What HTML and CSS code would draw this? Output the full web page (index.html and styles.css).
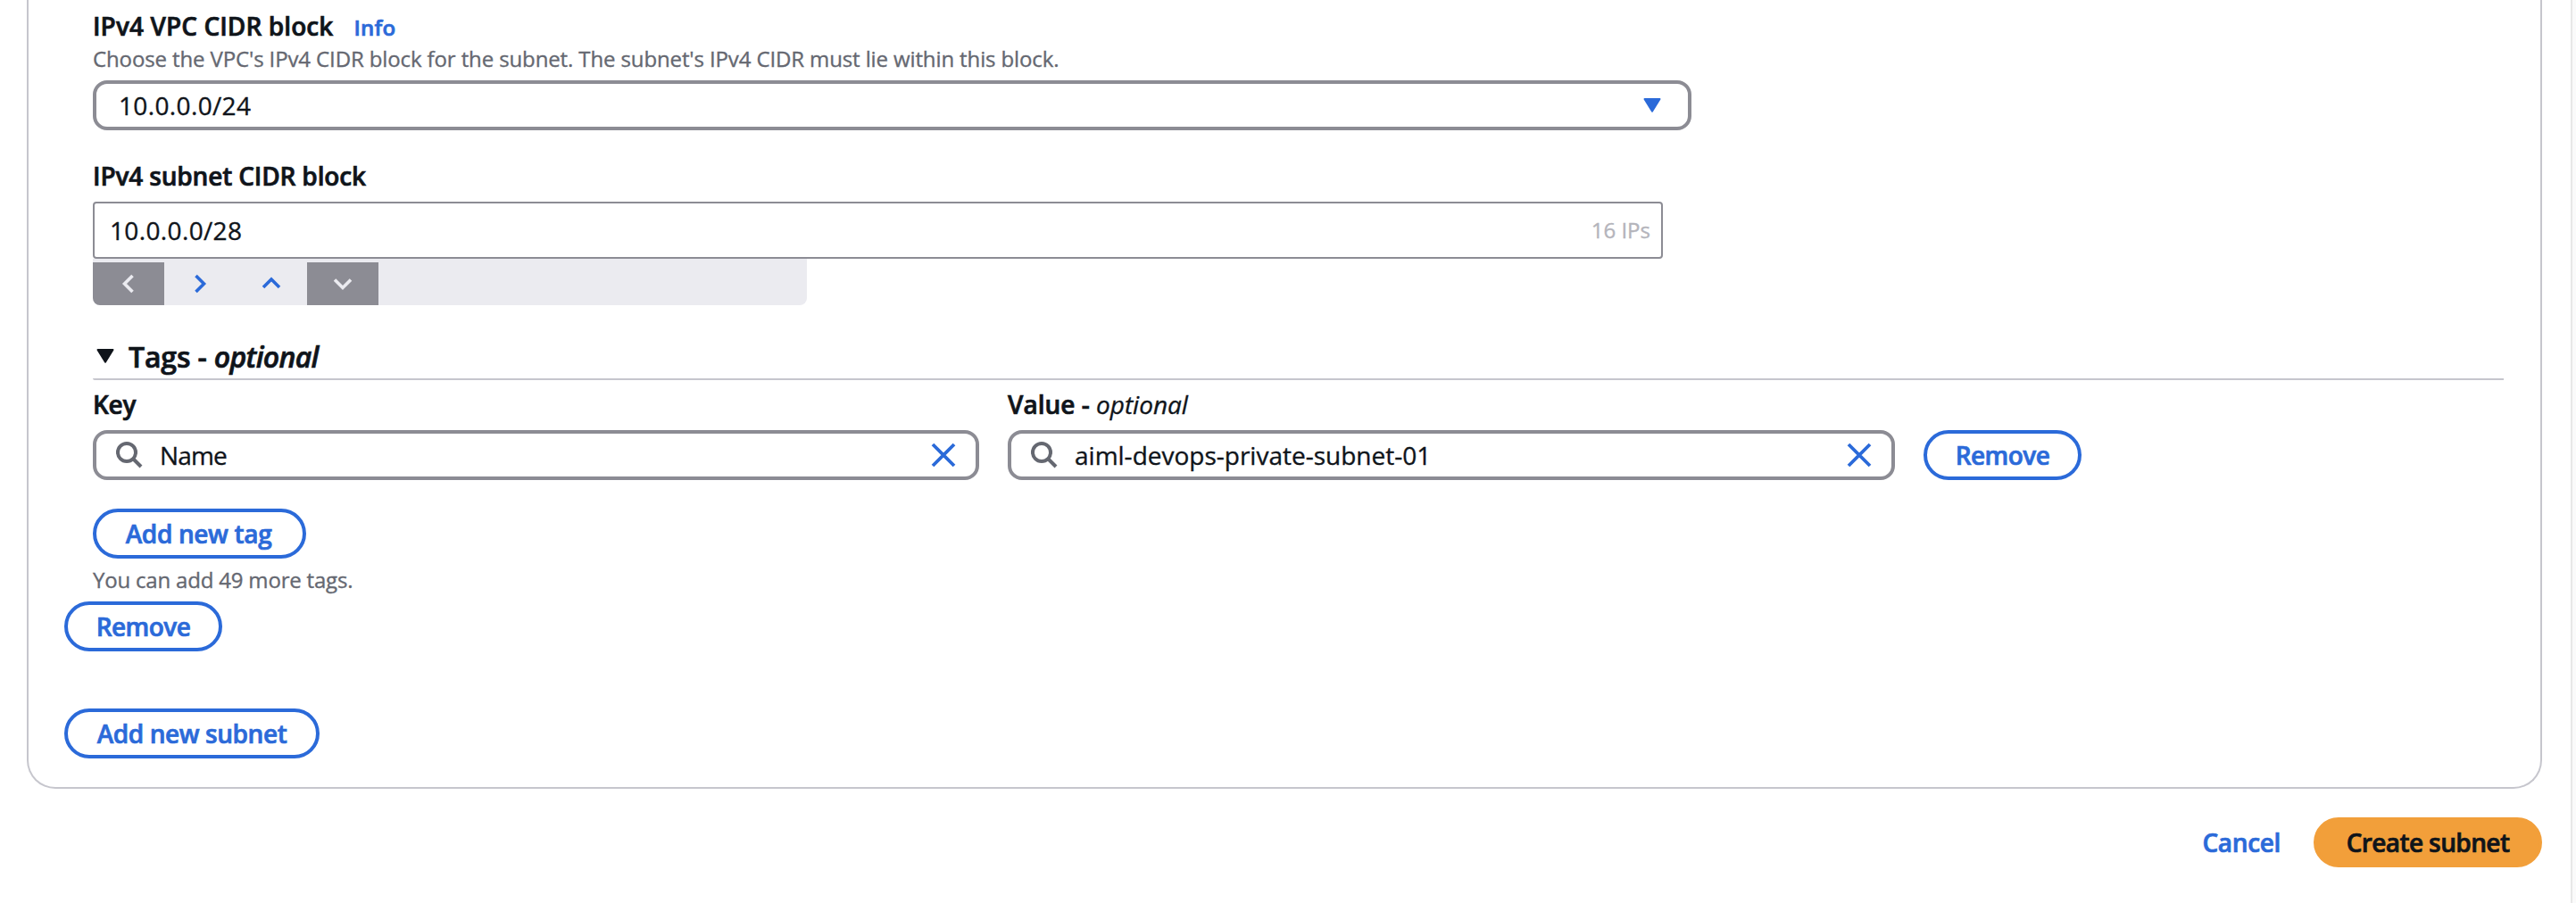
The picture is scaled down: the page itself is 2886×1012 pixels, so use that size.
FILE: index.html
```html
<!DOCTYPE html>
<html lang="en">
<head>
<meta charset="utf-8">
<title>Create subnet</title>
<link rel="stylesheet" href="styles.css">
</head>
<body>
<main class="page">
  <section class="container">
    <div class="fields">
      <div class="label-row"><span class="label t-vpc">IPv4 VPC CIDR block</span><a class="info">Info</a></div>
      <p class="hint t-desc">Choose the VPC's IPv4 CIDR block for the subnet. The subnet's IPv4 CIDR must lie within this block.</p>
      <div class="control select">
        <span class="t-ip">10.0.0.0/24</span>
        <svg class="caret" width="20" height="16" viewBox="0 0 20 16"><path d="M1.5 1h17L10 14.6z" fill="#2b6ad9" stroke="#2b6ad9" stroke-width="2" stroke-linejoin="round"/></svg>
      </div>

      <div class="label-row second"><span class="label t-subnet">IPv4 subnet CIDR block</span></div>
      <div class="cidr"><span class="t-ip">10.0.0.0/28</span><span class="count">16 IPs</span></div>
      <div class="toolbar">
        <button class="step off first"><svg width="32" height="32" viewBox="0 0 32 32"><path d="M20.5 7l-9 9 9 9"/></svg></button>
        <button class="step"><svg width="32" height="32" viewBox="0 0 32 32"><path d="M11.500 7l9 9-9 9"/></svg></button>
        <button class="step"><svg width="32" height="32" viewBox="0 0 32 32"><path d="M7 20l9-9 9 9"/></svg></button>
        <button class="step off"><svg width="32" height="32" viewBox="0 0 32 32"><path d="M7 11.500l9 9 9-9"/></svg></button>
      </div>

      <h3 class="section">
        <svg width="20" height="16" viewBox="0 0 20 16"><path d="M1.5 1h17L10 14.6z" fill="#0f141a" stroke="#0f141a" stroke-width="2" stroke-linejoin="round"/></svg>
        <span>Tags - <em>optional</em></span>
      </h3>

      <div class="tags">
        <div class="tag-col">
          <div class="label-row"><span class="label">Key</span></div>
          <div class="control search">
            <svg class="glass" width="32" height="32" viewBox="0 0 32 32"><circle cx="12" cy="12" r="10"/><path d="M19 19l9 9"/></svg>
            <span class="value t-name">Name</span>
            <svg class="clear" width="28" height="28" viewBox="0 0 28 28"><path d="M2 2l24 24M26 2L2 26"/></svg>
          </div>
        </div>
        <div class="tag-col">
          <div class="label-row"><span class="label t-value">Value - <em>optional</em></span></div>
          <div class="control search">
            <svg class="glass" width="32" height="32" viewBox="0 0 32 32"><circle cx="12" cy="12" r="10"/><path d="M19 19l9 9"/></svg>
            <span class="value">aiml-devops-private-subnet-01</span>
            <svg class="clear" width="28" height="28" viewBox="0 0 28 28"><path d="M2 2l24 24M26 2L2 26"/></svg>
          </div>
        </div>
        <button class="btn remove">Remove</button>
      </div>
      <button class="btn add-tag">Add new tag</button>
      <p class="hint t-more">You can add 49 more tags.</p>
    </div>
    <button class="btn remove">Remove</button>
    <button class="btn add-subnet">Add new subnet</button>
  </section>
  <footer class="actions">
    <a class="cancel">Cancel</a>
    <button class="btn primary">Create subnet</button>
  </footer>
</main>
<aside class="gutter"></aside>
</body>
</html>
```
FILE: styles.css
```css
* { box-sizing: border-box; }

body {
  margin: 0;
  display: flex;
  height: 1012px;
  overflow: hidden;
  background: #fff;
  color: #0f141a;
  font: 400 28px/40px "Open Sans", "Noto Sans", sans-serif;
  -webkit-text-stroke-width: 0.35px;
}

p, h3 { margin: 0; }
svg { display: block; flex: none; fill: none; }
button { font: inherit; margin: 0; padding: 0; }

.label, .info, .section, .btn, .cancel {
  font-weight: 600;
  -webkit-text-stroke-width: 0.7px;
}

.page { flex: 1; padding: 0 32px 0 30px; }

.container {
  display: flex;
  flex-direction: column;
  align-items: flex-start;
  height: 884px;
  padding: 9px 41px 0 40px;
  border: solid #c6c6cd;
  border-width: 0 2px 2px;
  border-radius: 0 0 32px 32px;
}

.fields {
  align-self: stretch;
  display: flex;
  flex-direction: column;
  align-items: flex-start;
  padding-left: 32px;
}

.label-row { display: flex; align-items: baseline; height: 40px; }
.label { letter-spacing: -0.25px; }
.label em {
  font-weight: 400;
  letter-spacing: -0.02px;
  -webkit-text-stroke-width: 0.35px;
}
.t-vpc { letter-spacing: 0.08px; }
.t-subnet { letter-spacing: -0.16px; }
.t-value { letter-spacing: 0; }

.info {
  margin-left: 23px;
  color: #2b6ad9;
  font-size: 24px;
  letter-spacing: 0.3px;
}

.hint { color: #656871; font-size: 24px; line-height: 32px; }
.t-desc { margin-top: 1px; letter-spacing: -0.12px; }
.t-more { margin-top: 8px; letter-spacing: -0.19px; }
.t-ip { letter-spacing: 0.36px; }
.t-name { letter-spacing: -0.85px; }

.control {
  display: flex;
  align-items: center;
  height: 56px;
  border: 4px solid #8c8c94;
  border-radius: 16px;
}

.select {
  width: 1791px;
  margin-top: 8px;
  padding: 0 30px 0 25px;
  justify-content: space-between;
}

.second { margin-top: 31px; }

.cidr {
  display: flex;
  align-items: center;
  justify-content: space-between;
  width: 1759px;
  height: 64px;
  margin-top: 9px;
  padding: 0 12px 0 17px;
  border: 2px solid #8c8c94;
  border-radius: 4px;
}
.count { color: #b4b4bb; font-size: 24px; }

.toolbar {
  display: flex;
  width: 800px;
  height: 52px;
  padding-top: 4px;
  background: #ebebf0;
  border-radius: 0 0 8px 8px;
}
.step {
  display: flex;
  align-items: center;
  justify-content: center;
  width: 80px;
  border: 0;
  background: none;
}
.step svg { stroke: #2b6ad9; stroke-width: 3.6; }
.off { background: #8c8c94; }
.off svg { stroke: #ebebf0; }
.first { border-bottom-left-radius: 8px; }

.section {
  align-self: stretch;
  display: flex;
  align-items: center;
  gap: 16px;
  height: 47px;
  margin-top: 37px;
  padding: 0 0 4px 4px;
  border-bottom: 2px solid #c6c6cd;
  border-bottom-left-radius: 2px;
  font-size: 32px;
}
.section svg { margin-bottom: 1px; }
.section span { letter-spacing: -0.15px; }
.section em { letter-spacing: -0.7px; }

.tags {
  display: flex;
  align-items: flex-end;
  gap: 32px;
  margin-top: 7px;
}
.tag-col { width: 993px; }
.tag-col + .tag-col { width: 994px; }
.search { margin-top: 9px; padding: 0 22px; }
.glass { margin: 1px 17px 0 0; stroke: #656871; stroke-width: 4; }
.value { flex: 1; }
.clear { stroke: #2b6ad9; stroke-width: 3.8; }

.btn {
  display: flex;
  align-items: center;
  justify-content: center;
  height: 56px;
  border: 4px solid #2b6ad9;
  border-radius: 28px;
  background: #fff;
  color: #2b6ad9;
  letter-spacing: -0.55px;
}
.remove { width: 177px; }
.add-tag { width: 239px; margin-top: 32px; padding-right: 2px; letter-spacing: -0.35px; }
.fields + .remove { margin-top: 8px; }
.add-subnet { width: 286px; margin-top: 64px; letter-spacing: -0.42px; }

.actions {
  display: flex;
  align-items: center;
  justify-content: flex-end;
  gap: 37px;
  margin-top: 32px;
}
.cancel { color: #2b6ad9; letter-spacing: -0.35px; }
.primary {
  width: 256px;
  border-color: #f29f3a;
  background: #f29f3a;
  color: #0f141a;
  letter-spacing: -0.6px;
}

.gutter { width: 6px; background: #fafafa; border-left: 2px solid #e8e8e8; }
```
